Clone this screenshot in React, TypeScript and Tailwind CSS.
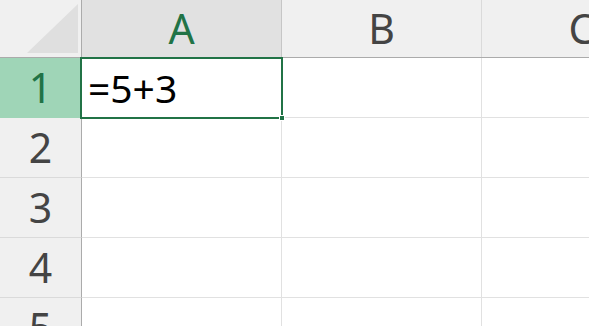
const columns = ['A', 'B', 'C'];
const rows = [1, 2, 3, 4, 5];

function CornerCell() {
  return (
    <div className="relative h-full w-[82px] shrink-0 border-r border-[#ababab] bg-[#f0f0f0]">
      <svg className="absolute left-0 top-0" width="81" height="57" viewBox="0 0 81 57">
        <polygon points="78,4 78,53 27,53" fill="#dfdfdf" />
      </svg>
    </div>
  );
}

export default function App() {
  return (
    <div
      className="relative h-[326px] w-[589px] overflow-hidden bg-white"
      style={{ fontFamily: '"Noto Sans", "Open Sans", sans-serif' }}
    >
      {/* Column headers */}
      <div className="flex h-[58px] border-b border-[#ababab]">
        <CornerCell />
        {columns.map((c) => (
          <div
            key={c}
            className={
              c === 'A'
                ? 'flex w-[200px] shrink-0 items-center justify-center border-r border-[#c6c6c6] bg-[#e1e1e1] text-[41px] text-[#217346]'
                : 'flex w-[200px] shrink-0 items-center justify-center border-r border-[#dadada] bg-[#f0f0f0] text-[41px] text-[#444444]'
            }
          >
            <span className="leading-none">{c}</span>
          </div>
        ))}
      </div>

      {/* Rows */}
      {rows.map((r) => (
        <div key={r} className="flex h-[60px]">
          <div
            className={
              r === 1
                ? 'flex w-[82px] shrink-0 items-center justify-center border-b border-r border-b-[#9fd5b7] border-r-[#ababab] bg-[#9fd5b7] text-[41px] text-[#217346]'
                : 'flex w-[82px] shrink-0 items-center justify-center border-b border-r border-b-[#dadada] border-r-[#ababab] bg-[#f0f0f0] text-[41px] text-[#444444]'
            }
          >
            <span className="leading-none">{r}</span>
          </div>
          {columns.map((c) => (
            <div
              key={c}
              className="flex w-[200px] shrink-0 items-center border-b border-r border-[#e1e1e1] pl-[6px] text-[39px] text-black"
            >
              {r === 1 && c === 'A' && <span className="leading-none">=5+3</span>}
            </div>
          ))}
        </div>
      ))}

      {/* Active cell selection */}
      <div className="absolute left-[80px] top-[57px] h-[62px] w-[203px] border-2 border-[#217346]" />
      <div className="absolute left-[279px] top-[115px] h-[6px] w-[6px] border border-white bg-[#217346]" />
    </div>
  );
}
